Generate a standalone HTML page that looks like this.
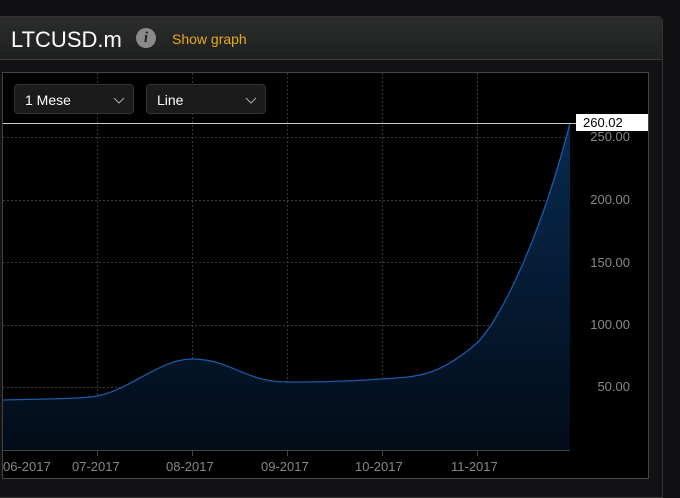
<!DOCTYPE html>
<html><head><style>
body{margin:0;width:680px;height:490px;background:#100f12;font-family:"Liberation Sans",sans-serif;position:relative;overflow:hidden}
.panel{position:absolute;left:-2px;top:16px;width:663px;height:480px;border:1px solid #333;border-radius:0 5px 0 0;background:#121114}
.hdr{position:absolute;left:0;top:0;width:663px;height:42px;background:linear-gradient(#2b2d2d,#1f2020);border-bottom:1px solid #3a3a3a;border-radius:0 5px 0 0}
.title{position:absolute;left:12px;top:10px;color:#fff;font-size:22px}
.info{position:absolute;left:137px;top:11px;width:20px;height:20px;border-radius:50%;background:#8a8a8a;color:#222;font:italic bold 15px "Liberation Serif",serif;text-align:center;line-height:20px}
.sg{position:absolute;left:173px;top:14px;color:#e8a91c;font-size:14px}
.dd{position:absolute;top:84px;height:30px;border:1px solid #333;border-radius:4px;background:#1b1b1c;color:#fff;font-size:14px;line-height:30px;box-sizing:border-box;padding-left:10px}
.dd svg{position:absolute;right:8px;top:12px}
.yl{position:absolute;right:50px;color:#888;font-size:13px}
.xl{position:absolute;top:459px;color:#888;font-size:13px}
</style></head><body>
<div class="panel"><div class="hdr"><div class="title">LTCUSD.m</div><div class="info">i</div><div class="sg">Show graph</div></div></div>
<div style="position:absolute;left:2px;top:72px;width:645px;height:405px;border:1px solid #444;background:#000"></div>
<svg style="position:absolute;left:0;top:0" width="680" height="490">
<defs><linearGradient id="g" x1="0" y1="0" x2="0" y2="1"><stop offset="0" stop-color="#082a50"/><stop offset="1" stop-color="#020c18"/></linearGradient></defs>
<g stroke="#3a3a3a" stroke-dasharray="2,2" stroke-width="1">
<line x1="97.5" y1="73" x2="97.5" y2="450"/><line x1="192.5" y1="73" x2="192.5" y2="450"/><line x1="287.5" y1="73" x2="287.5" y2="450"/><line x1="382.5" y1="73" x2="382.5" y2="450"/><line x1="477.5" y1="73" x2="477.5" y2="450"/>
<line x1="3" y1="137.5" x2="570" y2="137.5"/><line x1="3" y1="200.5" x2="570" y2="200.5"/><line x1="3" y1="262.5" x2="570" y2="262.5"/><line x1="3" y1="325.5" x2="570" y2="325.5"/><line x1="3" y1="387.5" x2="570" y2="387.5"/>
</g>
<path d="M3,400 C40,399 80,399 97,396 C130,390 160,359 192,359 C230,359 245,382 287,382 C330,382 350,381 382,379 C420,377 440,375 477,343 C500,320 540,240 570,123 L570,450 L3,450Z" fill="url(#g)" stroke="none"/>
<path d="M3,400 C40,399 80,399 97,396 C130,390 160,359 192,359 C230,359 245,382 287,382 C330,382 350,381 382,379 C420,377 440,375 477,343 C500,320 540,240 570,123" fill="none" stroke="#1a5ba8" stroke-width="1.3"/>
<line x1="3" y1="450.5" x2="570" y2="450.5" stroke="#444"/>
<g stroke="#444"><line x1="97.5" y1="450" x2="97.5" y2="456"/><line x1="192.5" y1="450" x2="192.5" y2="456"/><line x1="287.5" y1="450" x2="287.5" y2="456"/><line x1="382.5" y1="450" x2="382.5" y2="456"/><line x1="477.5" y1="450" x2="477.5" y2="456"/></g>
<line x1="3" y1="123.5" x2="576" y2="123.5" stroke="#ccc"/>
</svg>
<div style="position:absolute;left:576px;top:114px;width:72px;height:17px;background:#fff;color:#000;font-size:13px;line-height:17px;padding-left:7px;box-sizing:border-box">260.02</div>
<div class="yl" style="top:129px">250.00</div>
<div class="yl" style="top:192px">200.00</div>
<div class="yl" style="top:255px">150.00</div>
<div class="yl" style="top:317px">100.00</div>
<div class="yl" style="top:379px">50.00</div>
<div class="xl" style="left:3px">06-2017</div>
<div class="xl" style="left:72px">07-2017</div>
<div class="xl" style="left:166px">08-2017</div>
<div class="xl" style="left:261px">09-2017</div>
<div class="xl" style="left:355px">10-2017</div>
<div class="xl" style="left:451px">11-2017</div>
<div class="dd" style="left:14px;width:120px">1 Mese<svg width="12" height="7"><path d="M1,1 L6,6 L11,1" stroke="#aaa" fill="none"/></svg></div>
<div class="dd" style="left:146px;width:120px">Line<svg width="12" height="7"><path d="M1,1 L6,6 L11,1" stroke="#aaa" fill="none"/></svg></div>
</body></html>
